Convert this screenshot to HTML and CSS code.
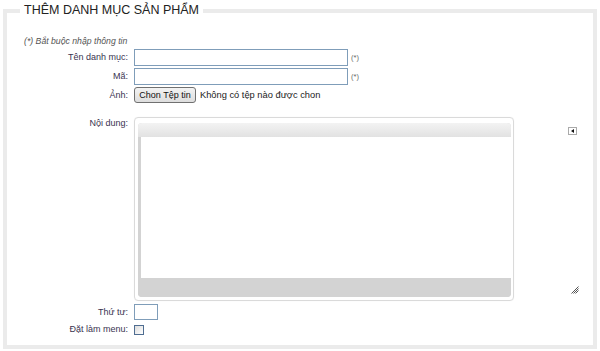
FILE: index.html
```html
<!DOCTYPE html>
<html lang="vi">
<head>
  <meta charset="UTF-8">
  <title>Thêm danh mục sản phẩm</title>
  <link rel="stylesheet" href="styles.css">
</head>
<body>

  <fieldset class="box">
    <legend>THÊM DANH MỤC SẢN PHẨM</legend>

    <p class="hint">(*) Bắt buộc nhập thông tin</p>

    <!-- Tên + Mã -->
    <div class="row">
      <label for="ten">Tên danh mục:</label>
      <div class="field">
        <input type="text" id="ten" class="text">
        <span class="req">(*)</span>
      </div>
    </div>
    <div class="row">
      <label for="ma">Mã:</label>
      <div class="field">
        <input type="text" id="ma" class="text">
        <span class="req">(*)</span>
      </div>
    </div>

    <!-- Ảnh -->
    <div class="row row-file">
      <label>Ảnh:</label>
      <div class="field">
        <span class="file-btn">Chon Tệp tin</span>
        <span class="file-name">Không có tệp nào được chon</span>
      </div>
    </div>

    <!-- Nội dung (editor) -->
    <div class="row row-editor">
      <label>Nội dung:</label>
      <div class="field editor-wrap">
        <div class="editor">
          <div class="editor-panel">
            <div class="editor-top"></div>
            <div class="editor-body" contenteditable="true"></div>
            <div class="editor-bottom"></div>
          </div>
        </div>
        <div class="editor-side">
          <span class="toggle"></span>
          <svg class="grip" width="8" height="8" viewBox="0 0 8 8">
            <path d="M7.5 0.5 L0.5 7.5 M7.5 2.5 L2.5 7.5 M7.5 4.5 L4.5 7.5" stroke="#555" stroke-width="1" fill="none"/>
          </svg>
        </div>
      </div>
    </div>

    <!-- Thứ tự + menu -->
    <div class="row row-order">
      <label for="thutu">Thứ tư:</label>
      <div class="field">
        <input type="text" id="thutu" class="text small">
      </div>
    </div>
    <div class="row row-menu">
      <label for="menu">Đặt làm menu:</label>
      <div class="field">
        <span class="check"></span>
      </div>
    </div>
  </fieldset>

</body>
</html>
```

FILE: styles.css
```css
body {
  margin: 0;
  padding-top: 2px;
  background: #fff;
  font-family: "Liberation Sans", Arial, sans-serif;
  font-size: 9px;
  color: #333;
}
.box {
  margin: 0 3px;
  padding: 0 0 7px 0;
  border: 4px solid #ebebeb;
  min-width: 0;
}
.box legend {
  margin-left: 13px;
  padding: 0 4px;
  font-size: 12.5px;
  line-height: 17px;
  color: #222;
}
.hint {
  margin: 16px 0 1px 17px;
  font-style: italic;
  font-size: 8.7px;
  line-height: 13px;
  color: #555;
}
.row {
  display: grid;
  grid-template-columns: 121px 1fr;
  column-gap: 6px;
  align-items: center;
  margin-bottom: 2px;
}
.row label {
  text-align: right;
  line-height: 13px;
  color: #3a3350;
}
.field {
  display: flex;
  align-items: center;
}
input.text {
  box-sizing: border-box;
  width: 214px;
  height: 17px;
  margin: 0;
  padding: 1px 2px;
  border: 1px solid #7f9db9;
  font: inherit;
}
input.small {
  width: 24px;
  height: 16px;
}
.req {
  margin-left: 3px;
  font-size: 7.5px;
  color: #666;
}
.row-file {
  margin-bottom: 14px;
}
.file-btn {
  box-sizing: border-box;
  height: 16px;
  width: 62px;
  border: 1px solid #707070;
  border-radius: 3px;
  background: linear-gradient(#f3f3f3, #dddddd);
  font-size: 9px;
  line-height: 14px;
  text-align: center;
  white-space: nowrap;
  color: #111;
}
.file-name {
  margin-left: 4px;
  font-size: 9.3px;
  color: #222;
}
.row-editor {
  align-items: start;
  margin-bottom: 3px;
}
.editor-wrap {
  align-items: stretch;
}
.editor {
  box-sizing: border-box;
  width: 380px;
  height: 184px;
  padding: 5px 2px 3px 3px;
  border: 1px solid #dadada;
  border-radius: 4px;
  box-shadow: 0 0 1px rgba(0,0,0,0.08);
  display: flex;
}
.editor-panel {
  flex: 1;
  display: flex;
  flex-direction: column;
  background: #d3d3d3;
  border-radius: 4px;
  overflow: hidden;
}
.editor-top {
  height: 14px;
  background: linear-gradient(#f3f3f3, #e2e2e2);
}
.editor-body {
  flex: 1;
  margin-left: 3px;
  background: #fff;
  outline: none;
}
.editor-bottom {
  height: 19px;
  background: #d3d3d3;
}
.editor-side {
  margin-left: 54px;
  display: flex;
  flex-direction: column;
  justify-content: space-between;
  align-items: flex-start;
  padding: 10px 0 7px;
}
.toggle {
  position: relative;
  box-sizing: border-box;
  width: 9px;
  height: 8px;
  border: 1px solid #aaa;
  background: #fff;
}
.toggle::after {
  content: "";
  position: absolute;
  left: 2px;
  top: 1px;
  border-top: 2px solid transparent;
  border-bottom: 2px solid transparent;
  border-right: 3px solid #111;
}
.grip {
  display: block;
  margin-left: 3px;
}
.row-order {
  margin-bottom: 3px;
}
.check {
  box-sizing: border-box;
  width: 10px;
  height: 10px;
  border: 1px solid #4f6d91;
  background: linear-gradient(135deg, #dcdcdc, #fff);
}
```
